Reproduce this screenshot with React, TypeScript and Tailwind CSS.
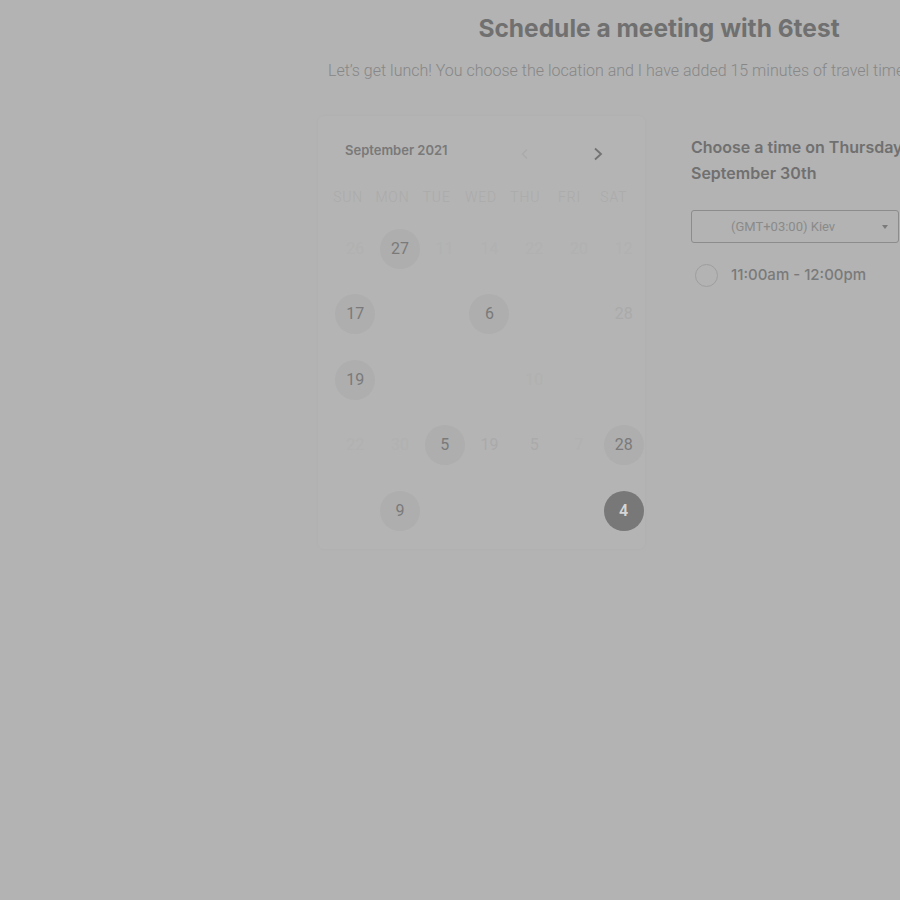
import React from "react";

type Day = { n: string; kind: "off" | "on" | "sel" | "dim" };

const weeks: Day[][] = [
  [
    { n: "26", kind: "off" },
    { n: "27", kind: "on" },
    { n: "11", kind: "off" },
    { n: "14", kind: "off" },
    { n: "22", kind: "off" },
    { n: "20", kind: "off" },
    { n: "12", kind: "off" },
  ],
  [
    { n: "17", kind: "on" },
    { n: "", kind: "off" },
    { n: "", kind: "off" },
    { n: "6", kind: "on" },
    { n: "", kind: "off" },
    { n: "", kind: "off" },
    { n: "28", kind: "dim" },
  ],
  [
    { n: "19", kind: "on" },
    { n: "", kind: "off" },
    { n: "", kind: "off" },
    { n: "", kind: "off" },
    { n: "10", kind: "off" },
    { n: "", kind: "off" },
    { n: "", kind: "off" },
  ],
  [
    { n: "22", kind: "off" },
    { n: "30", kind: "off" },
    { n: "5", kind: "on" },
    { n: "19", kind: "dim" },
    { n: "5", kind: "dim" },
    { n: "7", kind: "off" },
    { n: "28", kind: "on" },
  ],
  [
    { n: "", kind: "off" },
    { n: "9", kind: "on" },
    { n: "", kind: "off" },
    { n: "", kind: "off" },
    { n: "", kind: "off" },
    { n: "", kind: "off" },
    { n: "4", kind: "sel" },
  ],
];

const weekdays = ["SUN", "MON", "TUE", "WED", "THU", "FRI", "SAT"];

const DayCell: React.FC<{ day: Day }> = ({ day }) => {
  if (day.kind === "sel") {
    return (
      <div className="flex items-center justify-center w-10 h-10 rounded-full bg-[#787878] text-[#d6d6d6] text-base font-semibold">
        {day.n}
      </div>
    );
  }
  if (day.kind === "on") {
    return (
      <div className="flex items-center justify-center w-10 h-10 rounded-full bg-[#aeaeae] text-[#7a7a7a] text-base">
        {day.n}
      </div>
    );
  }
  return (
    <div
      className={
        day.kind === "dim"
          ? "flex items-center justify-center w-10 h-10 text-[#aaaaaa] text-base"
          : "flex items-center justify-center w-10 h-10 text-[#b1b1b1] text-base"
      }
    >
      {day.n}
    </div>
  );
};

export default function App() {
  return (
    <div className="w-[900px] h-[900px] overflow-hidden bg-[#b3b3b3] font-['Roboto',sans-serif]">
      <div className="flex w-[1000px]">
        <div className="w-[318px] shrink-0" />
        <main className="w-[682px] shrink-0">
          <h1 className="text-center pt-[13px] text-[24.5px] leading-[30px] font-bold text-[#707070] font-['Inter',sans-serif]">
            Schedule a meeting with 6test
          </h1>
          <p className="pl-[10px] mt-[16px] text-[16px] leading-[24px] font-light text-[#878787] whitespace-nowrap">
            Let’s get lunch! You choose the location and I have added 15 minutes of travel time.
          </p>

          <div className="flex mt-[33px] gap-[31px]">
            <section className="w-[327px] h-[433px] shrink-0 rounded-md bg-[#b4b4b4] shadow-[0_0_4px_rgba(0,0,0,0.025)] px-[8px]">
              <div className="flex items-center h-[30px] mt-[20px] pl-[19px]">
                <span className="text-[13px] font-semibold text-[#797979] font-['Inter',sans-serif]">
                  September 2021
                </span>
                <svg className="ml-[72px] mt-[6px]" width="10" height="12" viewBox="0 0 10 12" fill="none">
                  <path d="M7 1.5L2.5 6 7 10.5" stroke="#aaaaaa" strokeWidth="1.4" />
                </svg>
                <svg className="ml-[62px] mt-[6px]" width="12" height="14" viewBox="0 0 12 14" fill="none">
                  <path d="M3 1.5L9 7 3 12.5" stroke="#727272" strokeWidth="1.8" />
                </svg>
              </div>

              <div className="grid grid-cols-7 mt-[23px] w-[310px]">
                {weekdays.map((w) => (
                  <div key={w} className="text-center text-[14px] leading-[16px] font-light tracking-[0.06em] text-[#ababab]">
                    {w}
                  </div>
                ))}
              </div>

              <div className="grid grid-cols-7 mt-[11px] w-[313px] ml-[7px]">
                {weeks.map((week, wi) =>
                  week.map((d, di) => (
                    <div key={wi + "-" + di} className="flex items-center justify-center h-[65.5px]">
                      <DayCell day={d} />
                    </div>
                  ))
                )}
              </div>
            </section>

            <section className="flex-1 pt-[18px] pl-[15px]">
              <h2 className="text-[16px] leading-[26px] font-semibold text-[#707070] font-['Inter',sans-serif] whitespace-nowrap">
                Choose a time on Thursday,
                <br />
                September 30th
              </h2>
              <div className="relative mt-[24px] w-[208px] h-[33px] rounded-[3px] border border-[#8c8c8c] flex items-center">
                <span className="pl-[39px] text-[13px] text-[#8a8a8a]">(GMT+03:00) Kiev</span>
                <span className="absolute right-[10px] top-[14px] w-0 h-0 border-l-[3px] border-r-[3px] border-t-[4px] border-l-transparent border-r-transparent border-t-[#7a7a7a]" />
              </div>
              <div className="flex items-center mt-[21px] pl-[4px]">
                <span className="w-[23px] h-[23px] rounded-full border border-[#9e9e9e]" />
                <span className="ml-[13px] text-[15px] font-medium text-[#7a7a7a] font-['Inter',sans-serif]">
                  11:00am - 12:00pm
                </span>
              </div>
            </section>
          </div>
        </main>
      </div>
    </div>
  );
}
